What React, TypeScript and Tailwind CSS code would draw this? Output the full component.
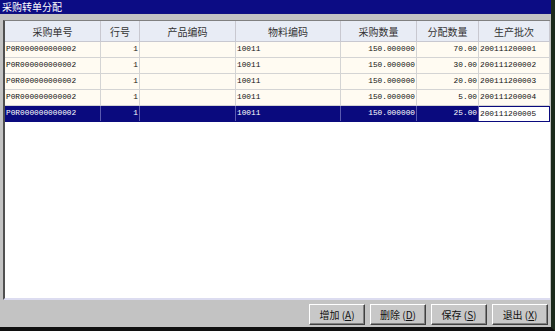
const cols = "grid-cols-[96px_39px_96px_105px_76px_62px_71px]";

const rows = [
  { no: "P0R000000000002", line: "1", prod: "", mat: "10011", qty: "150.000000", alloc: "70.00", batch: "200111200001" },
  { no: "P0R000000000002", line: "1", prod: "", mat: "10011", qty: "150.000000", alloc: "30.00", batch: "200111200002" },
  { no: "P0R000000000002", line: "1", prod: "", mat: "10011", qty: "150.000000", alloc: "20.00", batch: "200111200003" },
  { no: "P0R000000000002", line: "1", prod: "", mat: "10011", qty: "150.000000", alloc: "5.00", batch: "200111200004" },
  { no: "P0R000000000002", line: "1", prod: "", mat: "10011", qty: "150.000000", alloc: "25.00", batch: "200111200005" },
];

const headers = ["采购单号", "行号", "产品编码", "物料编码", "采购数量", "分配数量", "生产批次"];
const buttons = [
  ["增加", "A"],
  ["删除", "D"],
  ["保存", "S"],
  ["退出", "X"],
];

const cjk = "font-['SimSun','Noto_Sans_CJK_SC',sans-serif]";
const mono = "font-['Liberation_Mono',monospace]";

export default function App() {
  return (
    <div className={`w-[555px] h-[331px] bg-[#c3c3c3] flex flex-col border-r-[4px] border-r-[#1c2a1c] border-b-[4px] border-b-[#101010] ${cjk}`}>
      <div className="h-[14px] bg-[#0c0c84] text-white text-[10px] leading-[14px] pl-[2px] border-b border-b-[#101080]">采购转单分配</div>
      <div className="h-[6px]" />
      <div className="ml-[3px] w-[547px] h-[280px] bg-white border-l-[2px] border-l-[#505050] border-t-[1px] border-t-[#808080] border-b-[2px] border-b-[#dcdcf0] flex flex-col">
        <div className={`grid ${cols} h-[21px] bg-[#e8ecf5] border-b border-b-[#c8c8d0]`}>
          {headers.map((h) => (
            <div key={h} className="flex items-center justify-center text-[10px] text-[#333] border-r border-r-[#c8c8d0]">
              {h}
            </div>
          ))}
        </div>
        {rows.map((r, i) => {
          const sel = i === 4;
          const cell = sel
            ? "bg-[#0a0a7e] text-white border-r border-r-[#5a5ab0]"
            : "bg-[#fffbf2] text-[#111] border-r border-r-[#d4d4d4]";
          return (
            <div key={i} className={`grid ${cols} h-[16px] border-b ${sel ? "border-b-[#0a0a7e]" : "border-b-[#d4d4d4]"} ${mono} text-[7.8px] leading-[15px]`}>
              <div className={`${cell} pl-[1px]`}>{r.no}</div>
              <div className={`${cell} text-right pr-[1px]`}>{r.line}</div>
              <div className={cell}>{r.prod}</div>
              <div className={`${cell} pl-[1px]`}>{r.mat}</div>
              <div className={`${cell} text-right pr-[1px]`}>{r.qty}</div>
              <div className={`${cell} text-right pr-[1px]`}>{r.alloc}</div>
              <div className={sel ? "bg-white text-[#111] border-t border-t-[#0a0a7e] border-r border-r-[#0a0a7e] pl-[1px] leading-[14px]" : `${cell} pl-[1px]`}>{r.batch}</div>
            </div>
          );
        })}
      </div>
      <div className="flex justify-end gap-[5px] pr-[3px] pt-[4px]">
        {buttons.map(([t, k]) => (
          <div key={t} className="w-[56px] h-[21px] flex items-center justify-center text-[10px] text-[#111] bg-[#c8c8c8] border border-t-white border-l-white border-r-[#404040] border-b-[#404040] shadow-[inset_-1px_-1px_0_#808080]">
            {t}&nbsp;(<span className="underline">{k}</span>)
          </div>
        ))}
      </div>
    </div>
  );
}
